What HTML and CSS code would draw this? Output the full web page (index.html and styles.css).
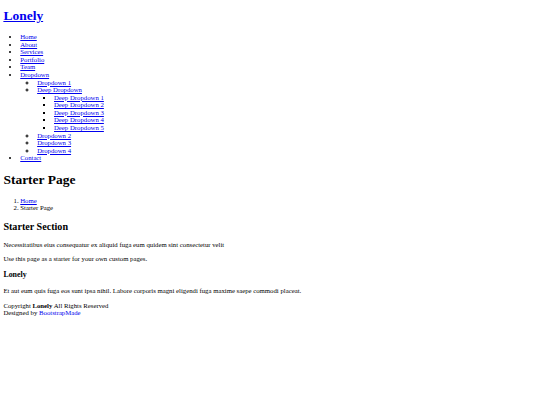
FILE: index.html
```html
<!DOCTYPE html>
<html lang="en">
<head>
<meta charset="utf-8">
<title>Starter Page - Lonely</title>
<link rel="stylesheet" href="styles.css">
</head>
<body class="page">
<header class="header">
  <div class="header-inner">
    <h1 class="logo"><a href="#" class="link">Lonely</a></h1>
    <nav class="navmenu">
      <ul class="menu">
        <li><a href="#" class="link">Home</a></li>
        <li><a href="#" class="link">About</a></li>
        <li><a href="#" class="link">Services</a></li>
        <li><a href="#" class="link">Portfolio</a></li>
        <li><a href="#" class="link">Team</a></li>
        <li><a href="#" class="link">Dropdown</a>
          <ul class="submenu">
            <li><a href="#" class="link">Dropdown 1</a></li>
            <li><a href="#" class="link">Deep Dropdown</a>
              <ul class="submenu deep">
                <li><a href="#" class="link">Deep Dropdown 1</a></li>
                <li><a href="#" class="link">Deep Dropdown 2</a></li>
                <li><a href="#" class="link">Deep Dropdown 3</a></li>
                <li><a href="#" class="link">Deep Dropdown 4</a></li>
                <li><a href="#" class="link">Deep Dropdown 5</a></li>
              </ul>
            </li>
            <li><a href="#" class="link">Dropdown 2</a></li>
            <li><a href="#" class="link">Dropdown 3</a></li>
            <li><a href="#" class="link">Dropdown 4</a></li>
          </ul>
        </li>
        <li><a href="#" class="link">Contact</a></li>
      </ul>
    </nav>
  </div>
</header>
<main class="main">
  <div class="page-title">
    <h1 class="title">Starter Page</h1>
    <nav class="breadcrumbs">
      <ol class="crumbs">
        <li><a href="#" class="link">Home</a></li>
        <li class="current">Starter Page</li>
      </ol>
    </nav>
  </div>
  <section class="section">
    <div class="section-title">
      <h2 class="section-heading">Starter Section</h2>
      <p class="para">Necessitatibus eius consequatur ex aliquid fuga eum quidem sint consectetur velit</p>
    </div>
    <div class="content">
      <p class="para">Use this page as a starter for your own custom pages.</p>
    </div>
  </section>
</main>
<footer class="footer">
  <div class="footer-top">
    <h3 class="footer-name">Lonely</h3>
    <p class="para">Et aut eum quis fuga eos sunt ipsa nihil. Labore corporis magni eligendi fuga maxime saepe commodi placeat.</p>
  </div>
  <div class="copyright">
    <span>Copyright</span> <strong class="strong">Lonely</strong> <span>All Rights Reserved</span>
  </div>
  <div class="credits">Designed by <a href="#" class="link">BootstrapMade</a></div>
</footer>
</body>
</html>
```

FILE: styles.css
```css
.page {
  margin: 3.375px;
  font-family: "Liberation Serif", "Times New Roman", serif;
  font-size: 6.75px;
  line-height: 7.46px;
  color: #000;
  background: #fff;
}
.link {
  color: #0000ee;
  text-decoration: underline;
}
.logo {
  font-size: 13.5px;
  line-height: 15.76px;
  font-weight: bold;
  margin: 5px 0 9.05px;
}
.menu {
  list-style: disc;
  margin: 6.75px 0;
  padding-left: 16.875px;
  line-height: 7.56px;
}
.submenu {
  list-style: circle;
  margin: 0;
  padding-left: 16.875px;
}
.submenu.deep {
  list-style: square;
}
.title {
  font-size: 13.5px;
  line-height: 15.76px;
  font-weight: bold;
  margin: 10px 0 9.05px;
}
.crumbs {
  list-style: decimal;
  margin: 6.75px 0;
  padding-left: 16.875px;
}
.section-heading {
  font-size: 10.125px;
  line-height: 11.4px;
  font-weight: bold;
  margin: 9.4px 0 8.4px;
}
.para {
  margin: 6.75px 0;
}
.footer-name {
  font-size: 7.9px;
  line-height: 9.2px;
  font-weight: bold;
  margin: 7.9px 0;
}
.strong {
  font-weight: bold;
}
```
